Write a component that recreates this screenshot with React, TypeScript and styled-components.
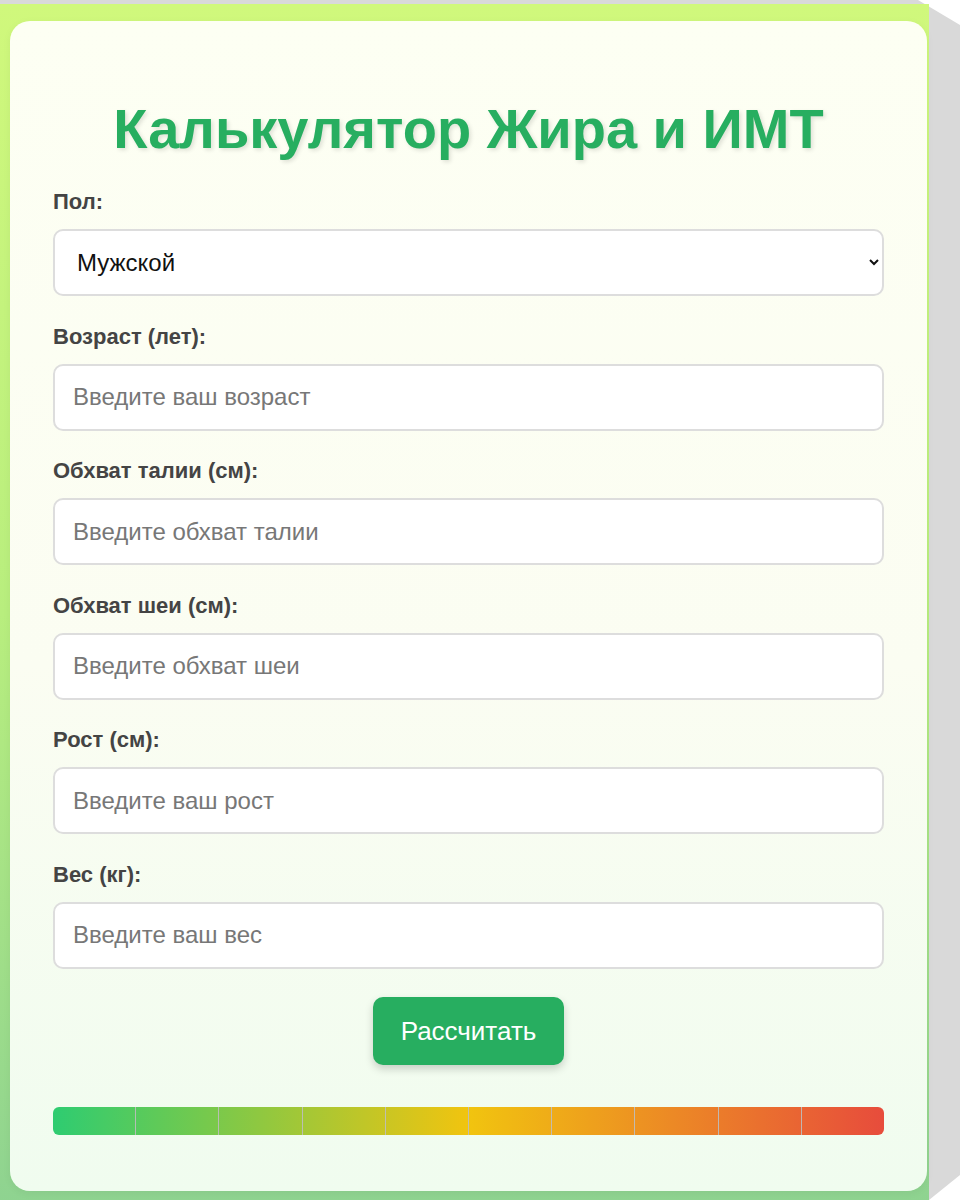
import React from "react";
import styled, { createGlobalStyle } from "styled-components";

const Global = createGlobalStyle`
  html, body { margin: 0; padding: 0; background: #ffffff; }
  body { font-family: "Liberation Sans", Arial, sans-serif; }
  * { box-sizing: border-box; }
`;

const Stage = styled.div`
  position: relative;
  width: 960px;
  height: 1200px;
  overflow: hidden;
  &::before {
    content: "";
    position: absolute;
    inset: 0;
    background: #d9d9d9;
    clip-path: polygon(0 0, 918px 0, 960px 25px, 960px 1175px, 929px 1200px, 0 1200px);
  }
`;

const Frame = styled.div`
  position: relative;
  margin-top: 4px;
  width: 929px;
  min-height: 1220px;
  padding: 17px 3px 20px 10px;
  background: linear-gradient(180deg, #d0f87c 0%, #b8ee7e 50%, #8dd291 100%);
`;

const Card = styled.div`
  width: 917px;
  border-radius: 20px;
  padding: 40px 43px 56px 43px;
  background: linear-gradient(180deg, #fdfff3 0%, #fbfdf2 55%, #f0fcef 100%);
  box-shadow: 0 2px 8px rgba(0, 0, 0, 0.05);
`;

const Title = styled.h1`
  margin: 36px 0 29px;
  text-align: center;
  font-size: 56px;
  line-height: 64px;
  font-weight: 700;
  color: #27ae60;
  text-shadow: 2px 2px 4px rgba(0, 0, 0, 0.12);
`;

const Field = styled.div`
  margin-bottom: 28.5px;
`;

const Label = styled.label`
  display: block;
  font-size: 22px;
  line-height: 23px;
  font-weight: 700;
  color: #444;
  margin-bottom: 16px;
`;

const fieldBase = `
  display: block;
  width: 100%;
  height: 67px;
  border: 2px solid #dddddd;
  border-radius: 10px;
  background: #ffffff;
  font-family: "Liberation Sans", Arial, sans-serif;
  font-size: 24px;
  color: #111;
  outline: none;
`;

const Input = styled.input`
  ${fieldBase}
  padding: 0 18px;
  &::placeholder { color: #777; }
`;

const Select = styled.select`
  ${fieldBase}
  padding: 0 12px 0 18px;
`;

const ButtonRow = styled.div`
  display: flex;
  justify-content: center;
`;

const Button = styled.button`
  height: 68px;
  padding: 0 28px;
  border: none;
  border-radius: 10px;
  background: #27ae60;
  color: #ffffff;
  font-family: "Liberation Sans", Arial, sans-serif;
  font-size: 26px;
  box-shadow: 0 4px 8px rgba(0, 0, 0, 0.18);
  cursor: pointer;
`;

const Scale = styled.div`
  margin-top: 42px;
  height: 28px;
  border-radius: 6px;
  overflow: hidden;
  display: flex;
  background: linear-gradient(90deg, #2ecc71 0%, #f1c40f 50%, #e74c3c 100%);
`;

const Segment = styled.div<{ $last?: boolean }>`
  flex: 1;
  border-right: ${(p) => (p.$last ? "none" : "1px solid rgba(190, 190, 190, 0.9)")};
`;

const fields = [
  { label: "Возраст (лет):", placeholder: "Введите ваш возраст" },
  { label: "Обхват талии (см):", placeholder: "Введите обхват талии" },
  { label: "Обхват шеи (см):", placeholder: "Введите обхват шеи" },
  { label: "Рост (см):", placeholder: "Введите ваш рост" },
  { label: "Вес (кг):", placeholder: "Введите ваш вес" },
];

export default function App() {
  return (
    <>
      <Global />
      <Stage>
        <Frame>
          <Card>
            <Title>Калькулятор Жира и ИМТ</Title>
            <Field>
              <Label>Пол:</Label>
              <Select defaultValue="male">
                <option value="male">Мужской</option>
                <option value="female">Женский</option>
              </Select>
            </Field>
            {fields.map((f) => (
              <Field key={f.label}>
                <Label>{f.label}</Label>
                <Input type="number" placeholder={f.placeholder} />
              </Field>
            ))}
            <ButtonRow>
              <Button>Рассчитать</Button>
            </ButtonRow>
            <Scale>
              {Array.from({ length: 10 }).map((_, i) => (
                <Segment key={i} $last={i === 9} />
              ))}
            </Scale>
          </Card>
        </Frame>
      </Stage>
    </>
  );
}
